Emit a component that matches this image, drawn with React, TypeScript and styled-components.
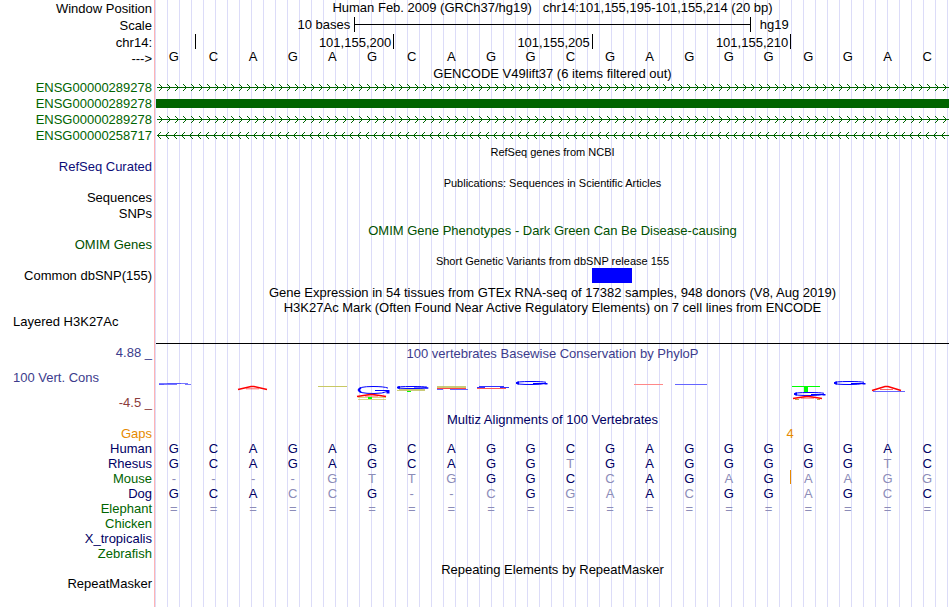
import React from 'react';
import styled, { createGlobalStyle } from 'styled-components';

const GlobalStyle = createGlobalStyle`
  body { margin: 0; background: #fff; }
`;

const NAVY = '#000064';
const PALE = '#8c8cb8';
const GREEN = '#006400';
const ORANGE = '#e68a00';

const Page = styled.main`
  display: flex;
  flex-direction: column;
  min-height: 100vh;
  padding-right: 1px;
  box-sizing: border-box;
  font-family: 'Liberation Sans', Arial, sans-serif;
  font-size: 13px;
  line-height: 15px;
  color: #000;
  white-space: pre;
`;

const Row = styled.div<{ $h: number; $fill?: boolean }>`
  display: grid;
  grid-template-columns: 154px 1fr;
  flex: ${(p) => (p.$fill ? '1 0' : '0 0')} ${(p) => p.$h}px;
  height: ${(p) => (p.$fill ? 'auto' : `${p.$h}px`)};
`;

const Label = styled.div<{ $color?: string; $line?: number }>`
  padding-right: 2px;
  text-align: right;
  color: ${(p) => p.$color ?? '#000'};
  line-height: ${(p) => p.$line ?? 15}px;
`;

const SideLabel = styled(Label)`
  padding-left: 13px;
  text-align: left;
`;

const ConservationLabels = styled.div`
  display: flex;
  flex-direction: column;
  gap: 10px;
  padding-top: 10px;
`;

const Track = styled.div`
  min-width: 0;
  border-left: 1px solid #ffb4b4;
  padding-left: 1px;
  background: linear-gradient(to right, transparent 11px, #dcdcf8 11px) 1px 0 / 12px 100%;
`;

const Title = styled.div<{ $color?: string; $small?: boolean; $line?: number }>`
  text-align: center;
  color: ${(p) => p.$color ?? '#000'};
  font-size: ${(p) => (p.$small ? 11 : 13)}px;
  line-height: ${(p) => p.$line ?? 17}px;
`;

const Positions = styled.div`
  display: grid;
  grid-template-columns: 1fr 5fr 5fr 5fr 4fr;
  height: 100%;
  margin-right: -1px;
  line-height: 17px;
`;

const Tick = styled.div`
  text-align: right;
  padding-right: 2px;
  border-right: 1px solid #000;
  height: 15px;
`;

const ScaleGrid = styled.div`
  display: grid;
  grid-template-columns: 5fr 10fr 5fr;
`;

const ScaleText = styled.span<{ $end?: boolean }>`
  text-align: ${(p) => (p.$end ? 'right' : 'left')};
  padding: ${(p) => (p.$end ? '0 4px 0 0' : '0 0 0 9px')};
`;

const ScaleBar = styled.div`
  height: 15px;
  border: solid #000;
  border-width: 0 1px;
  background: linear-gradient(#000, #000) 0 7px / 100% 1px no-repeat;
`;

const Bases = styled.div<{ $line?: number }>`
  display: grid;
  grid-template-columns: repeat(20, 1fr);
  margin: 0 2px 0 -2px;
  text-align: center;
  line-height: ${(p) => p.$line ?? 15}px;
`;

const Base = styled.span<{ $color: string; $insert?: boolean }>`
  color: ${(p) => p.$color};
  position: relative;
  &::before {
    content: '';
    display: ${(p) => (p.$insert ? 'block' : 'none')};
    position: absolute;
    left: 2px;
    top: -1px;
    width: 1px;
    height: 14px;
    background: ${ORANGE};
  }
`;

const Exon = styled.div`
  height: 9px;
  margin-top: 3px;
  background: ${GREEN};
`;

const Strand = styled.svg`
  display: block;
  width: 100%;
  height: 15px;
`;

const Variants = styled.div`
  display: grid;
  grid-template-columns: 11fr 1fr 8fr;
`;

const Variant = styled.div`
  grid-column: 2;
  height: 15px;
  background: #00f;
`;

const Baseline = styled.div`
  height: 29px;
  border-bottom: 1px solid #000;
`;

const Logo = styled.svg`
  display: block;
  width: 100%;
  height: 51px;
`;

const GapCount = styled.div`
  display: grid;
  grid-template-columns: 16fr 4fr;
  color: ${ORANGE};
`;

const GapValue = styled.span`
  grid-column: 2;
  margin-left: -4px;
`;

function Intron({ id, reverse }: { id: string; reverse?: boolean }) {
  return (
    <Strand aria-hidden="true" shapeRendering="crispEdges">
      <defs>
        <pattern id={id} width="8" height="15" patternUnits="userSpaceOnUse">
          {reverse ? (
            <path d="M1 7h1v1h-1zM2 6h1v1h-1zM3 5h1v1h-1zM4 4h1v1h-1zM2 8h1v1h-1zM3 9h1v1h-1zM4 10h1v1h-1z" fill={GREEN} />
          ) : (
            <path d="M6 7h1v1h-1zM5 6h1v1h-1zM4 5h1v1h-1zM3 4h1v1h-1zM5 8h1v1h-1zM4 9h1v1h-1zM3 10h1v1h-1z" fill={GREEN} />
          )}
        </pattern>
      </defs>
      <rect x="1" y="7" width="100%" height="1" fill={GREEN} />
      <rect width="100%" height="15" fill={`url(#${id})`} />
    </Strand>
  );
}

const HUMAN = 'GCAGAGCAGGCGAGGGGGAC';

const species = [
  { name: 'Human', color: NAVY, bases: HUMAN },
  { name: 'Rhesus', color: NAVY, bases: 'GCAGAGCAGGTGAGGGGGTC' },
  { name: 'Mouse', color: GREEN, bases: '----GTTGGGCCAGAGAAGG', insert: 16 },
  { name: 'Dog', color: NAVY, bases: 'GCACCG--CGGAACGGAGCC' },
  { name: 'Elephant', color: GREEN, bases: '====================' },
  { name: 'Chicken', color: GREEN, bases: '' },
  { name: 'X_tropicalis', color: NAVY, bases: '' },
  { name: 'Zebrafish', color: GREEN, bases: '' },
];

type HeadingProps = { children: string; color?: string; small?: boolean };

function Heading({ children, color, small }: HeadingProps) {
  return (
    <Row $h={15}>
      <Label />
      <Track><Title $color={color} $small={small}>{children}</Title></Track>
    </Row>
  );
}

type ItemProps = { name: string; color?: string; h?: number; fill?: boolean; children?: React.ReactNode };

function Item({ name, color, h = 16, fill, children }: ItemProps) {
  return (
    <Row $h={h} $fill={fill}>
      <Label $color={color}>{name}</Label>
      <Track>{children}</Track>
    </Row>
  );
}

type MarkProps = { x: number; y: number; h: number };

/* Flattened open loop with a short inner bar, 33 wide. */
function Loop({ x, y, h }: MarkProps) {
  const top = y + 0.5;
  const mid = y + h / 2;
  const end = y + h - 0.5;
  return (
    <g stroke="#00f">
      <path d={`M${x + 31} ${top + h / 5}Q${x + 27} ${top} ${x + 16} ${top}Q${x + 1} ${top} ${x + 1} ${mid}Q${x + 1} ${end} ${x + 17} ${end}Q${x + 26} ${end} ${x + 30} ${end - h / 4}`} />
      <path d={`M${x + 4} ${top + h / 6}Q${x} ${mid} ${x + 4} ${end - h / 6}`} strokeWidth="2" />
      <path d={`M${x + 18} ${mid + 0.5}h14`} />
      <path d={`M${x + 31} ${mid}V${end}`} strokeWidth="3" />
    </g>
  );
}

/* Flattened caret with a crossbar, 30 wide. */
function Caret({ x, y, h }: MarkProps) {
  return (
    <g stroke="#f00">
      <path d={`M${x} ${y + h - 0.5}L${x + 13} ${y + 0.5}h3L${x + 29} ${y + h - 0.5}`} strokeWidth="1.5" />
      <path d={`M${x + 8} ${y + h * 0.7}h13`} strokeOpacity="0.6" />
    </g>
  );
}

function ConservationLogo() {
  return (
    <Logo viewBox="156 360 793 51" preserveAspectRatio="none" fill="none" role="img" aria-label="PhyloP conservation">
      <path d="M159 383.500h8M180 383.500h8M163 384.500h14M185 384.500h6" stroke="#77f" />
      <path d="M159 384.500h5M167 383.500h14" stroke="#55f" />
      <Caret x={238} y={386} h={4} />
      <path d="M318 386.500h29" stroke="#c8c864" />

      <Loop x={357} y={386} h={8} />
      <Caret x={357} y={394} h={3} />
      <path d="M358 397.500h28M358 399.500h28" stroke="#b4b400" strokeOpacity="0.5" />
      <path d="M368 398h4" stroke="#0f0" strokeWidth="2" />

      <Loop x={396} y={386} h={3} />
      <path d="M399 389.500h26M397 390.500h28" stroke="#b4b43c" strokeOpacity="0.7" />
      <path d="M407 391.500h4" stroke="#0f0" />

      <path d="M437 386.500h29M437 387.500h29" stroke="#b4b43c" strokeOpacity="0.7" />
      <path d="M437 388.500h29" stroke="#f44" />
      <path d="M437 389.500h6M450 389.500h18" stroke="#66f" />

      <path d="M479 386.500h25M477 387.500h8M500 387.500h9" stroke="#33f" />
      <path d="M477 388.500h29" stroke="#f55" />

      <Loop x={515} y={381} h={4} />
      <path d="M634 384.500h29" stroke="#f88" />
      <path d="M675 384.500h32" stroke="#66f" />

      <path d="M792 386.500h28" stroke="#0f0" />
      <path d="M806 386v6" stroke="#0f0" strokeWidth="4" />
      <Loop x={793} y={392} h={4} />
      <Caret x={793} y={396} h={3} />
      <path d="M795 399.500h4M817 399.500h3" stroke="#c8a03c" />

      <Loop x={833} y={381} h={4} />
      <path d="M873 391.500h32" stroke="#66f" />
      <Caret x={872} y={386} h={5} />
    </Logo>
  );
}

export default function App() {
  return (
    <>
      <GlobalStyle />
      <Page>
        <Row $h={17}>
          <Label $line={17}>Window Position</Label>
          <Track>
            <Title $line={15}>Human Feb. 2009 (GRCh37/hg19)   chr14:101,155,195-101,155,214 (20 bp)</Title>
          </Track>
        </Row>
        <Row $h={17}>
          <Label $line={17}>Scale</Label>
          <Track>
            <ScaleGrid>
              <ScaleText $end>10 bases</ScaleText>
              <ScaleBar />
              <ScaleText>hg19</ScaleText>
            </ScaleGrid>
          </Track>
        </Row>
        <Row $h={17}>
          <Label $line={17}>chr14:</Label>
          <Track>
            <Positions>
              <Tick />
              <Tick>101,155,200</Tick>
              <Tick>101,155,205</Tick>
              <Tick>101,155,210</Tick>
            </Positions>
          </Track>
        </Row>
        <Row $h={14}>
          <Label>---&gt;</Label>
          <Track>
            <Bases $line={11}>
              {[...HUMAN].map((b, i) => <Base key={i} $color="#000">{b}</Base>)}
            </Bases>
          </Track>
        </Row>

        <Heading>GENCODE V49lift37 (6 items filtered out)</Heading>
        <Item name="ENSG00000289278" color={GREEN}><Intron id="intron-a" /></Item>
        <Row $h={16}>
          <Label $color={GREEN}>ENSG00000289278</Label>
          <Track><Exon /></Track>
        </Row>
        <Item name="ENSG00000289278" color={GREEN}><Intron id="intron-b" /></Item>
        <Item name="ENSG00000258717" color={GREEN}><Intron id="intron-c" reverse /></Item>

        <Heading small>RefSeq genes from NCBI</Heading>
        <Item name="RefSeq Curated" color="#0c0c78" />
        <Heading small>Publications: Sequences in Scientific Articles</Heading>
        <Item name="Sequences" />
        <Item name="SNPs" />
        <Heading color="#005000">OMIM Gene Phenotypes - Dark Green Can Be Disease-causing</Heading>
        <Item name="OMIM Genes" color="#005000" />
        <Heading small>Short Genetic Variants from dbSNP release 155</Heading>
        <Item name="Common dbSNP(155)"><Variants><Variant /></Variants></Item>
        <Heading>Gene Expression in 54 tissues from GTEx RNA-seq of 17382 samples, 948 donors (V8, Aug 2019)</Heading>
        <Heading>H3K27Ac Mark (Often Found Near Active Regulatory Elements) on 7 cell lines from ENCODE</Heading>
        <Row $h={31}>
          <SideLabel>Layered H3K27Ac</SideLabel>
          <Track><Baseline /></Track>
        </Row>

        <Row $h={15}>
          <Label $color="#3c3c8c">4.88 _</Label>
          <Track><Title $color="#3c3c8c">100 vertebrates Basewise Conservation by PhyloP</Title></Track>
        </Row>
        <Row $h={51}>
          <ConservationLabels>
            <SideLabel $color="#3c3c8c">100 Vert. Cons</SideLabel>
            <Label $color="#8c3c3c">-4.5 _</Label>
          </ConservationLabels>
          <Track><ConservationLogo /></Track>
        </Row>

        <Heading color={NAVY}>Multiz Alignments of 100 Vertebrates</Heading>
        <Item name="Gaps" color={ORANGE} h={15}><GapCount><GapValue>4</GapValue></GapCount></Item>
        {species.map((s) => (
          <Item key={s.name} name={s.name} color={s.color} h={15}>
            <Bases>
              {[...s.bases].map((b, i) => (
                <Base key={i} $color={b === HUMAN[i] ? NAVY : PALE} $insert={s.insert === i}>{b}</Base>
              ))}
            </Bases>
          </Item>
        ))}

        <Heading>Repeating Elements by RepeatMasker</Heading>
        <Item name="RepeatMasker" h={31} fill />
      </Page>
    </>
  );
}
